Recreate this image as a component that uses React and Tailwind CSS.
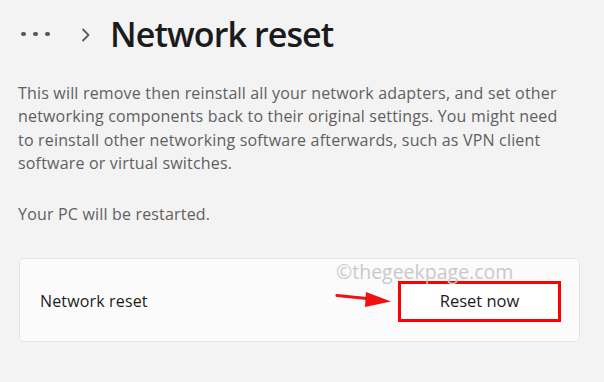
const App = () => {
  return (
    <div
      className="w-[604px] h-[382px] bg-[#f3f3f3] overflow-hidden"
      style={{ fontFamily: '"Open Sans", "Noto Sans", sans-serif' }}
    >
      {/* Breadcrumb header */}
      <div className="flex items-center h-[40px] mt-[14px] pl-[21px]">
        <div className="flex items-center gap-[7.5px] w-[30px]">
          <span className="w-[4.5px] h-[4.5px] rounded-full bg-[#5a5a5a]" />
          <span className="w-[4.5px] h-[4.5px] rounded-full bg-[#5a5a5a]" />
          <span className="w-[4.5px] h-[4.5px] rounded-full bg-[#5a5a5a]" />
        </div>
        <svg className="ml-[30px] mt-[2px]" width="10" height="14" viewBox="0 0 10 14">
          <path d="M2 1.5 L7.5 7 L2 12.5" fill="none" stroke="#5c5c5c" strokeWidth="1.8" strokeLinecap="round" strokeLinejoin="round" />
        </svg>
        <h1 className="ml-[19px] text-[34px] leading-[40px] font-semibold tracking-[-0.9px] text-[#1b1b1b]">
          Network reset
        </h1>
      </div>

      {/* Description */}
      <p className="mt-[28px] ml-[18px] w-[556px] text-[16px] leading-[23.3px] tracking-[0.18px] text-[#606060]">
        This will remove then reinstall all your network adapters, and set other networking components back to their
        original settings. You might need to reinstall other networking software afterwards, such as VPN client software
        or virtual switches.
      </p>
      <p className="mt-[28px] ml-[18px] text-[16px] leading-[23px] tracking-[0.18px] text-[#606060]">
        Your PC will be restarted.
      </p>

      {/* Card */}
      <div className="relative mt-[32px] ml-[19px] w-[561px] h-[84px] bg-[#fbfbfb] border border-[#e5e5e5] rounded-[5px] flex items-center justify-between pl-[20px] pr-[18px]">
        <span className="text-[16px] tracking-[0.15px] text-[#1b1b1b] mt-[2px]">Network reset</span>
        <button className="w-[163px] h-[41px] bg-white border-[3px] border-[#ff0000] text-[16.5px] text-[#1b1b1b] mt-[3px]">
          Reset now
        </button>

        <span className="absolute left-[316px] top-[-2px] text-[19.5px] text-[#c9c9c9]">©thegeekpage.com</span>

        <svg className="absolute left-[315px] top-[30px]" width="58" height="20" viewBox="0 0 58 20">
          <path d="M2 6.5 L32 9.5" stroke="#ee1111" strokeWidth="3.2" strokeLinecap="round" />
          <path d="M31 3 L56 12.5 L30 18 Z" fill="#ee1111" />
        </svg>
      </div>
    </div>
  );
};

export default App;
